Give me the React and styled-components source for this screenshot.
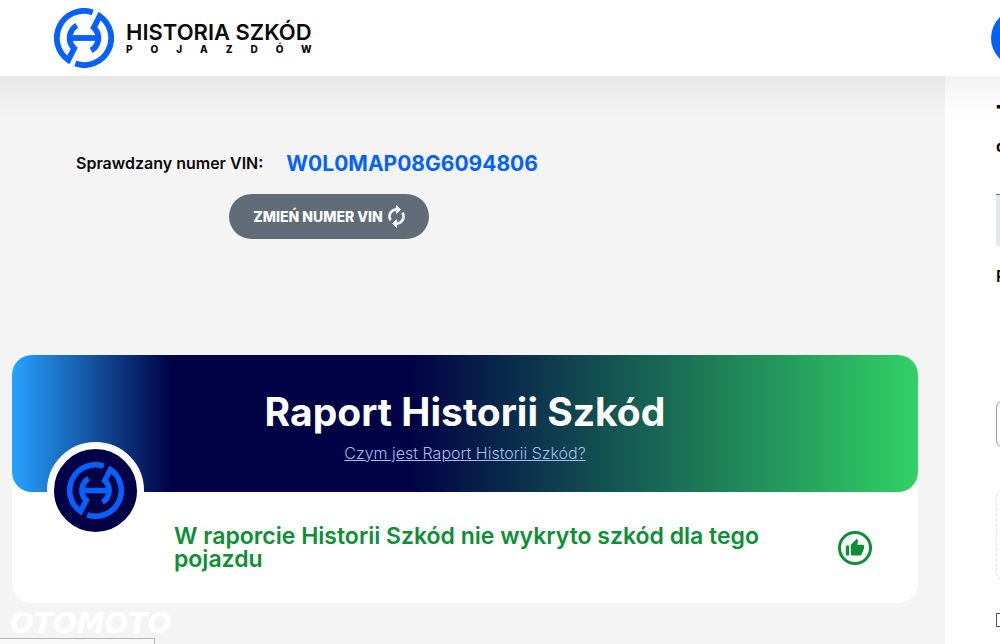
import React from "react";
import styled, { createGlobalStyle } from "styled-components";
import { MdThumbUp } from "react-icons/md";

const GlobalStyle = createGlobalStyle`
  *, *::before, *::after { box-sizing: border-box; }
  body {
    margin: 0;
    background: #f4f4f4;
    color: #0a0a0a;
    font-family: Inter, "Liberation Sans", sans-serif;
  }
  h1, h2, p { margin: 0; }
`;

const Page = styled.div`
  display: flex;
  flex-direction: column;
  height: 100vh;
  overflow: hidden;
`;

const Header = styled.header`
  display: flex;
  align-items: center;
  justify-content: space-between;
  flex: none;
  height: 76px;
  padding-left: 54px;
  background: #fff;
`;

const Brand = styled.a`
  display: flex;
  align-items: center;
  gap: 12px;
  color: #0a0a0a;
  text-decoration: none;
`;

const BrandText = styled.span`
  display: flex;
  flex-direction: column;
`;

const BrandName = styled.span`
  font-size: 22px;
  line-height: 22px;
  font-weight: 600;
`;

const BrandSub = styled.span`
  font-size: 10px;
  line-height: 12px;
  font-weight: 800;
  letter-spacing: 18px;
`;

const HeaderSlot = styled.div`
  width: 9px;
  overflow: hidden;
`;

const RoundButton = styled.button`
  display: block;
  width: 58px;
  height: 58px;
  padding: 0;
  border: 0;
  border-radius: 50%;
  background: #0561fc;
`;

const Columns = styled.div`
  display: grid;
  grid-template-columns: minmax(0, 1fr) 55px;
  flex: 1;
  min-height: 0;
  background:
    linear-gradient(rgba(0, 0, 0, 0.05), rgba(0, 0, 0, 0) 40px),
    linear-gradient(#fff, #fff) right / 55px 100% no-repeat,
    #f4f4f4;
`;

const Main = styled.main`
  display: flex;
  flex-direction: column;
  padding: 74px 27px 0 12px;
`;

const VinSection = styled.section`
  display: flex;
  flex-direction: column;
  align-items: flex-start;
  gap: 17px;
  padding-left: 64px;
`;

const VinRow = styled.p`
  display: flex;
  align-items: center;
  gap: 23px;
  font-size: 16px;
  line-height: 27px;
  font-weight: 600;
`;

const Vin = styled.strong`
  color: #0561fc;
  font-size: 21px;
  font-weight: 700;
`;

const ChangeButton = styled.button`
  display: flex;
  align-items: center;
  justify-content: center;
  gap: 5px;
  width: 200px;
  height: 45px;
  margin-left: 153px;
  padding: 0;
  border: 0;
  border-radius: 23px;
  background: #616c78;
  color: #fff;
  font: 800 14px/20px Inter, "Liberation Sans", sans-serif;
`;

const Report = styled.section`
  margin-top: 116px;
  border-radius: 20px;
  background: #fff;
`;

const Banner = styled.div`
  position: relative;
  display: flex;
  flex-direction: column;
  align-items: center;
  gap: 6px;
  height: 137px;
  padding-top: 32px;
  border-radius: 20px;
  background: linear-gradient(90deg, #26a3ff 0%, #010245 17.5%, #010245 44%, #31d165 100%);
`;

const Title = styled.h1`
  color: #fff;
  font-size: 39px;
  line-height: 50px;
  font-weight: 700;
`;

const InfoLink = styled.a`
  color: #a3bdf2;
  font-size: 16px;
  line-height: 20px;
  font-weight: 300;
`;

const Badge = styled.span`
  position: absolute;
  left: 35px;
  bottom: -47px;
  display: flex;
  align-items: center;
  justify-content: center;
  width: 97px;
  height: 97px;
  border: 7px solid #fff;
  border-radius: 50%;
  background: #010245;
`;

const Result = styled.div`
  display: flex;
  align-items: center;
  justify-content: space-between;
  gap: 64px;
  height: 111px;
  padding: 0 46px 0 162px;
  color: #0c8f35;
`;

const ResultText = styled.h2`
  font-size: 23px;
  line-height: 23px;
  font-weight: 600;
`;

const ThumbRing = styled.span`
  display: flex;
  flex: none;
  align-items: center;
  justify-content: center;
  width: 34px;
  height: 34px;
  border: 3px solid;
  border-radius: 50%;
`;

const Aside = styled.aside`
  display: flex;
  flex-direction: column;
  padding: 23px 0 0 51px;
  overflow: hidden;
`;

const AsideTitle = styled.h2`
  font-size: 24px;
  line-height: 32px;
  font-weight: 800;
`;

const AsideText = styled.p`
  margin-top: 5px;
  font-size: 16px;
  line-height: 20px;
  font-weight: 700;
`;

const AsideInput = styled.input`
  flex: none;
  width: 240px;
  padding: 0;
`;

const FilledInput = styled(AsideInput)`
  height: 52px;
  margin-top: 38px;
  border: 0;
  border-top: 1px solid #5f7390;
  background: #e0e9f2;
`;

const AsideLabel = styled.label`
  margin-top: 20px;
  font-size: 16px;
  line-height: 20px;
  font-weight: 600;
`;

const OutlinedInput = styled(AsideInput)`
  height: 46px;
  margin-top: 115px;
  border: 1px solid #999;
  border-radius: 6px;
  background: #fff;
`;

const DashedBox = styled.div`
  flex: none;
  width: 240px;
  height: 96px;
  margin-top: 40px;
  border: 1px dashed #d5e2f0;
  border-radius: 12px;
`;

const Checkbox = styled.input`
  appearance: none;
  flex: none;
  width: 14px;
  height: 14px;
  margin: 30px 0 0;
  border: 1px solid #555;
  background: #fff;
`;

const Watermark = styled.span`
  position: absolute;
  left: 10px;
  bottom: 6px;
  color: #fff;
  font: italic 700 28px/28px "DejaVu Sans", Verdana, sans-serif;
`;

const StatusBar = styled.div`
  position: absolute;
  left: 0;
  bottom: 0;
  width: 155px;
  height: 6px;
  border: solid #b4b4b4;
  border-width: 1px 1px 0 0;
  background: #f8f8f8;
`;

const HALF = "M38.7 4.4A27 27 0 0 0 14.3 52L20.2 40.4A14.3 14.3 0 0 1 22.8 17.6";

function Emblem({ size }) {
  return (
    <svg width={size} height={size} viewBox="0 0 60 60" fill="none" stroke="#0561fc" strokeWidth="5.8" aria-hidden="true">
      <path d={HALF} />
      <path d={HALF} transform="rotate(180 30 30)" />
      <path d="M16 30H44" />
    </svg>
  );
}

function RenewIcon() {
  return (
    <svg width="17" height="23" viewBox="3.5 0.5 17 23" fill="currentColor" stroke="currentColor" strokeWidth="0.7" aria-hidden="true">
      <path d="M12 6v3l4-4-4-4v3c-4.42 0-8 3.58-8 8 0 1.57.46 3.03 1.24 4.26L6.7 14.8A5.87 5.87 0 0 1 6 12c0-3.31 2.69-6 6-6z" />
      <path d="M18.76 7.74L17.3 9.2c.44.84.7 1.79.7 2.8 0 3.31-2.69 6-6 6v-3l-4 4 4 4v-3c4.42 0 8-3.58 8-8 0-1.57-.46-3.03-1.24-4.26z" />
    </svg>
  );
}

export default function App() {
  return (
    <Page>
      <GlobalStyle />
      <Header>
        <Brand href="#">
          <Emblem size={60} />
          <BrandText>
            <BrandName>HISTORIA SZKÓD</BrandName>
            <BrandSub>POJAZDÓW</BrandSub>
          </BrandText>
        </Brand>
        <HeaderSlot>
          <RoundButton aria-label="Menu" />
        </HeaderSlot>
      </Header>
      <Columns>
        <Main>
          <VinSection>
            <VinRow>
              Sprawdzany numer VIN: <Vin>W0L0MAP08G6094806</Vin>
            </VinRow>
            <ChangeButton>
              ZMIEŃ NUMER VIN <RenewIcon />
            </ChangeButton>
          </VinSection>
          <Report>
            <Banner>
              <Title>Raport Historii Szkód</Title>
              <InfoLink href="#">Czym jest Raport Historii Szkód?</InfoLink>
              <Badge>
                <Emblem size={57} />
              </Badge>
            </Banner>
            <Result>
              <ResultText>W raporcie Historii Szkód nie wykryto szkód dla tego pojazdu</ResultText>
              <ThumbRing>
                <MdThumbUp size={20} />
              </ThumbRing>
            </Result>
          </Report>
        </Main>
        <Aside>
          <AsideTitle>T</AsideTitle>
          <AsideText>d</AsideText>
          <FilledInput aria-label="VIN" />
          <AsideLabel htmlFor="field">R</AsideLabel>
          <OutlinedInput id="field" />
          <DashedBox />
          <Checkbox type="checkbox" aria-label="Zgoda" />
        </Aside>
      </Columns>
      <Watermark>OTOMOTO</Watermark>
      <StatusBar />
    </Page>
  );
}
